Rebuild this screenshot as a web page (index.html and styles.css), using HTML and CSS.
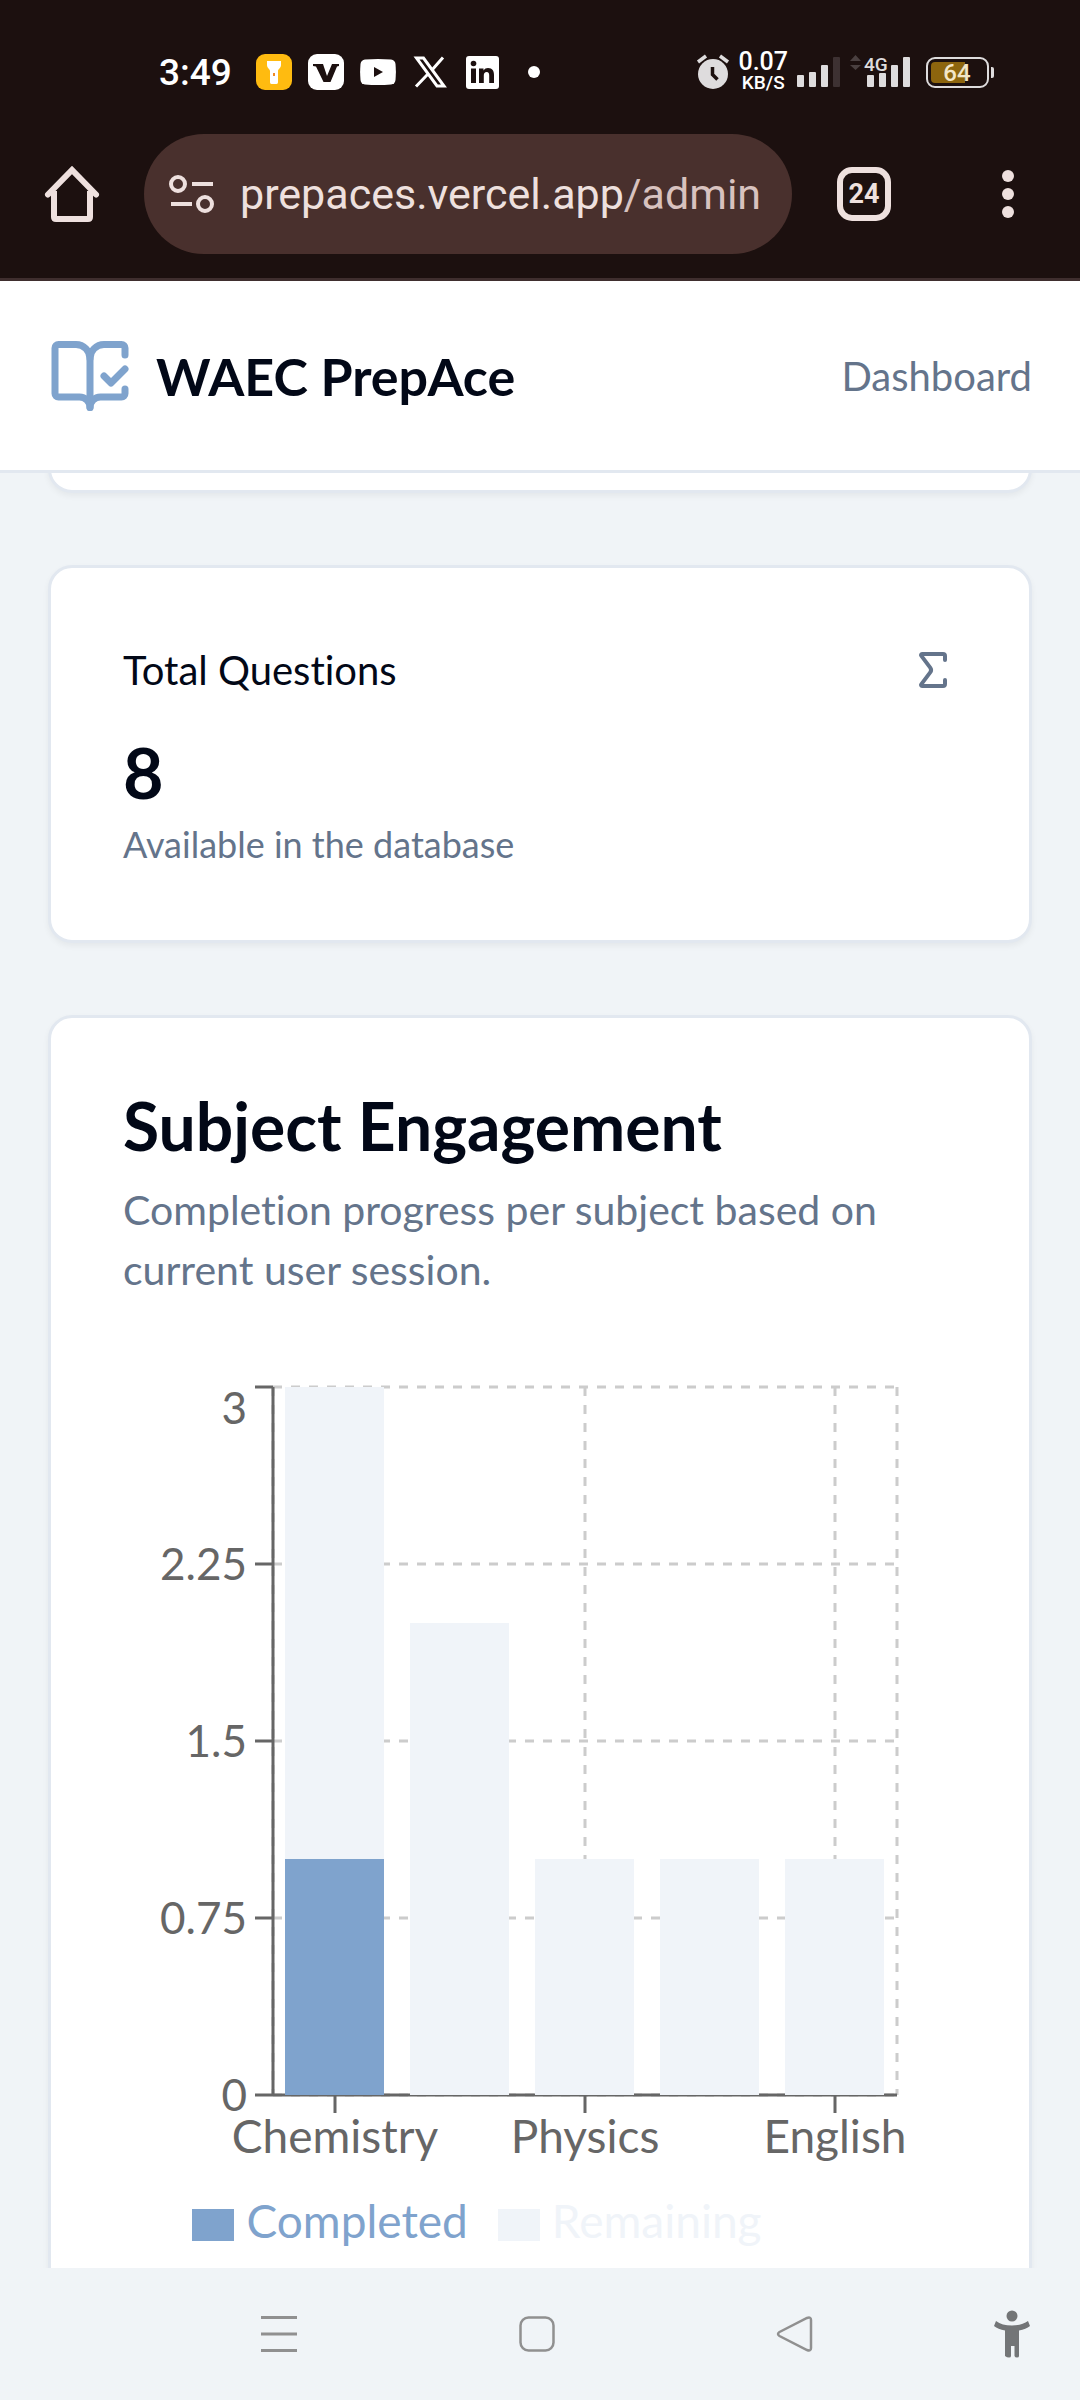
FILE: index.html
```html
<!DOCTYPE html>
<html lang="en">
<head>
  <meta charset="UTF-8">
  <meta name="viewport" content="width=device-width, initial-scale=1.0">
  <title>WAEC PrepAce - Admin</title>
  <link rel="stylesheet" href="styles.css">
</head>
<body>

  <!-- Phone status bar -->
  <div class="status-bar">
    <div class="status-left">
      <span class="clock">3:49</span>
      <svg class="app-icon" viewBox="0 0 36 36">
        <rect width="36" height="36" rx="9" fill="#ffbb10"/>
        <path d="M11 7h14v4c0 3-3 4-3 6v11c0 1-.5 2-1.500 2h-5c-1 0-1.500-1-1.500-2V17c0-2-3-3-3-6z" fill="#fff"/>
        <rect x="17" y="19" width="2" height="3" fill="#f08a24"/>
      </svg>
      <svg class="app-icon" viewBox="0 0 36 36">
        <rect width="36" height="36" rx="9" fill="#fff"/>
        <path d="M5 10h10l4 12 5-12h7v2l-2 .5L22.500 28h-7L8 12.500 5 12z" fill="#1c100f"/>
      </svg>
      <svg class="app-icon" viewBox="0 0 36 36">
        <path d="M5 5.500Q18 4.500 31 5.500Q35 6 35.500 10Q36.400 18 35.500 26Q35 30 31 30.500Q18 31.500 5 30.500Q1 30 .5 26Q-.4 18 .5 10Q1 6 5 5.500z" fill="#fff"/>
        <path d="M14 13v10l9-5z" fill="#1c100f"/>
      </svg>
      <svg class="app-icon" viewBox="0 0 36 36">
        <path d="M4.500 4h7L32 32h-7z" fill="none" stroke="#fff" stroke-width="3"/>
        <path d="M31 3.500 20 16M15.500 20.500 4 32.500" stroke="#fff" stroke-width="3"/>
      </svg>
      <svg class="app-icon" viewBox="0 0 36 36">
        <rect x="2" y="2" width="33" height="33" rx="3" fill="#fff"/>
        <circle cx="9.500" cy="9.500" r="2.800" fill="#1c100f"/>
        <path d="M7 14.500h5V29H7zM15 14.500h4.500v2c1-1.700 2.700-2.500 4.500-2.500 4.500 0 6 3 6 7v8h-4.800v-7.500c0-2-.6-3.500-2.500-3.500-2 0-2.900 1.500-2.900 3.500V29H15z" fill="#1c100f"/>
      </svg>
      <svg class="app-icon" viewBox="0 0 36 36"><circle cx="18" cy="18" r="6" fill="#fff"/></svg>
    </div>
    <div class="status-right">
      <svg width="32" height="36" viewBox="0 0 32 36" fill="none">
        <circle cx="16" cy="20" r="15" fill="#dedcdd"/>
        <path d="M1 8l8-6M31 8l-8-6" stroke="#dedcdd" stroke-width="3.500"/>
        <path d="M15.500 13v7.500l5 5" stroke="#1c100f" stroke-width="3.500"/>
      </svg>
      <div class="net-speed"><span>0.07</span><small>KB/S</small></div>
      <svg width="44" height="36" viewBox="0 0 44 36" fill="#dedcdd">
        <rect x="0" y="21" width="7" height="12" rx="1"/>
        <rect x="12" y="18" width="7" height="15" rx="1"/>
        <rect x="24" y="11" width="7" height="22" rx="1"/>
        <rect x="36" y="3" width="7" height="30" rx="1" fill="#3d3132"/>
      </svg>
      <svg class="signal-4g" width="61" height="36" viewBox="0 0 61 36" fill="#dedcdd">
        <path d="M0 7l5.500-6L11 7zM0 11h11l-5.500 5z" fill="#4a4040"/>
        <text x="14" y="17">4G</text>
        <rect x="17" y="21" width="7" height="12" rx="1"/>
        <rect x="29" y="19" width="7" height="14" rx="1"/>
        <rect x="41" y="11" width="7" height="22" rx="1"/>
        <rect x="53" y="3" width="7" height="30" rx="1"/>
      </svg>
      <svg class="battery" width="68" height="36" viewBox="0 0 68 36">
        <rect x="1" y="4" width="61" height="29" rx="8" fill="none" stroke="#dedcdd" stroke-width="2"/>
        <path d="M65 13h1q2 0 2 2v7q0 2-2 2h-1z" fill="#dedcdd"/>
        <path d="M39 8v21H9q-4 0-4-4V12q0-4 4-4z" fill="#8d650e"/>
        <text x="31" y="27">64</text>
      </svg>
    </div>
  </div>

  <!-- Browser toolbar -->
  <div class="toolbar">
    <button class="tool-btn" aria-label="Home">
      <svg width="72" height="72" viewBox="0 0 72 72" fill="none" stroke="#eee0de" stroke-width="6">
        <path d="M12 36.500 36 12l24 24.500" stroke-linecap="round"/>
        <path d="M18 33v26q0 2 2 2h32q2 0 2-2V33"/>
      </svg>
    </button>
    <button class="address" aria-label="Address">
      <svg width="48" height="48" viewBox="0 0 48 48" fill="none" stroke="#eee0de" stroke-width="4">
        <circle cx="10" cy="14" r="7"/>
        <path d="M24 14h21M3 34h21"/>
        <circle cx="37" cy="34" r="7"/>
      </svg>
      <span>prepaces.vercel.app<span class="path">/admin</span></span>
    </button>
    <button class="tab-count" aria-label="Tabs">24</button>
    <button class="menu-btn" aria-label="More">
      <svg width="12" height="48" viewBox="0 0 12 48" fill="#eee0de">
        <circle cx="6" cy="6" r="6"/><circle cx="6" cy="24" r="6"/><circle cx="6" cy="42" r="6"/>
      </svg>
    </button>
  </div>

  <header class="site-header">
    <div class="brand">
      <svg class="brand-icon" viewBox="0 0 24 24">
        <path d="M12 21V7"/>
        <path d="m16 12 2 2 4-4"/>
        <path d="M22 6V4a1 1 0 0 0-1-1h-5a4 4 0 0 0-4 4 4 4 0 0 0-4-4H3a1 1 0 0 0-1 1v13a1 1 0 0 0 1 1h6a3 3 0 0 1 3 3 3 3 0 0 1 3-3h6a1 1 0 0 0 1-1v-1.300"/>
      </svg>
      <span>WAEC PrepAce</span>
    </div>
    <a class="nav-link" href="#">Dashboard</a>
  </header>

  <main class="content">
    <div class="card card-scrolled"></div>

    <section class="card">
      <div class="stat-head">
        <span>Total Questions</span>
        <svg class="stat-icon" viewBox="0 0 24 24">
          <path d="M18 7V5a1 1 0 0 0-1-1H6.500a.5.5 0 0 0-.4.8l4.500 6a2 2 0 0 1 0 2.400l-4.500 6a.5.5 0 0 0 .4.8H17a1 1 0 0 0 1-1v-2"/>
        </svg>
      </div>
      <div class="stat-value">8</div>
      <p class="stat-note">Available in the database</p>
    </section>

    <section class="card">
      <h2>Subject Engagement</h2>
      <p class="description">Completion progress per subject based on current user session.</p>

      <svg class="chart" viewBox="0 0 834 813">
        <g class="grid">
          <path d="M150 15H774M150 192H774M150 369H774M150 546H774M150 723H774"/>
          <path d="M150 15V723M212 15V723M462 15V723M712 15V723M774 15V723"/>
        </g>
        <g class="axis">
          <path d="M150 15V723M132 15h18M132 192h18M132 369h18M132 546h18M132 723h18"/>
          <path d="M150 723H774M212 723v18M462 723v18M712 723v18"/>
        </g>
        <g class="remaining">
          <rect x="162" y="15" width="99" height="472"/>
          <rect x="287" y="251" width="99" height="472"/>
          <rect x="412" y="487" width="99" height="236"/>
          <rect x="537" y="487" width="99" height="236"/>
          <rect x="662" y="487" width="99" height="236"/>
        </g>
        <rect class="completed" x="162" y="487" width="99" height="236"/>
        <g class="labels-y">
          <text x="124" y="52">3</text>
          <text x="124" y="208">2.25</text>
          <text x="124" y="385">1.5</text>
          <text x="124" y="562">0.75</text>
          <text x="124" y="739">0</text>
        </g>
        <g class="labels-x">
          <text x="212" y="781">Chemistry</text>
          <text x="462" y="781">Physics</text>
          <text x="712" y="781">English</text>
        </g>
      </svg>
      <ul class="legend">
        <li class="legend-completed">Completed</li>
        <li class="legend-remaining">Remaining</li>
      </ul>
    </section>
  </main>

  <!-- System navigation -->
  <nav class="system-nav">
    <button aria-label="Recent apps">
      <svg width="36" height="36" viewBox="0 0 36 36" stroke="#909090" stroke-width="3"><path d="M0 1.500h36M0 18h36M0 34.500h36"/></svg>
    </button>
    <button aria-label="Home screen">
      <svg width="36" height="36" viewBox="0 0 36 36" fill="none" stroke="#909090" stroke-width="2.500"><rect x="1.500" y="1.500" width="33" height="33" rx="8"/></svg>
    </button>
    <button aria-label="Back">
      <svg width="36" height="36" viewBox="0 0 36 36" fill="none" stroke="#909090" stroke-width="2.500"><path d="M2.500 16 30 2q4-1.500 4 2v28q0 3.500-4 2L2.500 20q-3-2 0-4z"/></svg>
    </button>
    <button aria-label="Accessibility">
      <svg width="36" height="48" viewBox="0 0 36 48" fill="#737577">
        <circle cx="18" cy="6" r="5.500"/>
        <path d="M2 11q6 4.500 16 4.500T34 11l2 5q-4 3-11 4.500V46q0 1.500-2 1.500T20.500 46V36h-3.500v10q0 1.500-2 1.500T11 46V20.500Q4 19 0 16z"/>
      </svg>
    </button>
  </nav>

</body>
</html>
```

FILE: styles.css
```css
* {
  box-sizing: border-box;
}

body {
  display: flex;
  flex-direction: column;
  height: 100vh;
  margin: 0;
  overflow: hidden;
  background-color: #f0f4f7;
  color: #020817;
  font-family: Lato, "Noto Sans", sans-serif;
  font-variant-ligatures: none;
}

svg {
  display: block;
  flex-shrink: 0;
  overflow: visible;
}

button {
  padding: 0;
  border: none;
  background: none;
  font: inherit;
  cursor: pointer;
}

h2,
p,
ul {
  margin: 0;
  padding: 0;
}

/* Status bar */
.status-bar {
  display: flex;
  flex-shrink: 0;
  align-items: center;
  justify-content: space-between;
  height: 134px;
  padding: 10px 86px 0 159px;
  background-color: #1c100f;
  color: #fff;
  font-family: Roboto, sans-serif;
}

.status-left {
  display: flex;
  align-items: center;
  gap: 16px;
}

.clock {
  margin-right: 8px;
  font-size: 37px;
  font-weight: 500;
}

.app-icon {
  width: 36px;
  height: 36px;
}

.status-right {
  display: flex;
  align-items: center;
  gap: 9px;
}

.net-speed {
  display: flex;
  flex-direction: column;
  align-items: center;
  font-weight: 500;
}

.net-speed span {
  font-size: 25px;
  line-height: 22px;
}

.net-speed small {
  font-size: 19px;
  line-height: 20px;
}

.signal-4g text {
  font-size: 19px;
  font-weight: 500;
}

.battery {
  margin-left: 6px;
}

.battery text {
  fill: #f3e6c8;
  font-size: 24px;
  font-weight: 500;
  text-anchor: middle;
}

/* Browser toolbar */
.toolbar {
  display: flex;
  flex-shrink: 0;
  align-items: center;
  height: 147px;
  padding: 0 66px 24px 36px;
  border-bottom: 3px solid #3f2e2e;
  background-color: #1c100f;
  font-family: Roboto, sans-serif;
}

.address {
  display: flex;
  flex: 1;
  align-items: center;
  gap: 24px;
  height: 120px;
  margin: 0 45px 0 36px;
  padding-left: 24px;
  border-radius: 60px;
  background-color: #49302d;
  color: #eee0de;
  font-size: 43px;
  white-space: nowrap;
}

.path {
  color: #d8c2bf;
}

.tab-count {
  width: 54px;
  height: 54px;
  margin-right: 111px;
  border: 6px solid #eee0de;
  border-radius: 15px;
  color: #eee0de;
  font-size: 27px;
  font-weight: 700;
}

/* Site header */
.site-header {
  display: flex;
  flex-shrink: 0;
  align-items: center;
  justify-content: space-between;
  height: 192px;
  padding: 0 48px;
  border-bottom: 3px solid #e2e8f0;
  background-color: #fff;
}

.brand {
  display: flex;
  align-items: center;
  gap: 24px;
  font-size: 52px;
  font-weight: 700;
}

.brand-icon,
.stat-icon {
  fill: none;
  stroke: #7fa3cd;
  stroke-width: 2;
  stroke-linecap: round;
  stroke-linejoin: round;
}

.brand-icon {
  width: 84px;
  height: 84px;
}

.nav-link {
  color: #64748b;
  font-size: 40px;
  text-decoration: none;
}

/* Cards */
.content {
  display: flex;
  flex: 1;
  flex-direction: column;
  gap: 72px;
  min-height: 0;
  padding: 0 48px;
  overflow: hidden;
}

.card {
  flex-shrink: 0;
  padding: 72px;
  border: 3px solid #e2e8f0;
  border-radius: 24px;
  background-color: #fff;
  box-shadow: 0 3px 6px rgba(0, 0, 0, 0.05);
}

/* Only the bottom edge shows under the header */
.card-scrolled {
  height: 150px;
  margin-top: -130px;
}

.stat-head {
  display: flex;
  align-items: center;
  justify-content: space-between;
  padding-bottom: 24px;
  font-size: 40px;
  line-height: 60px;
}

.stat-icon {
  width: 48px;
  height: 48px;
  stroke: #64748b;
}

.stat-value {
  font-size: 70px;
  font-weight: 700;
  line-height: 96px;
}

.stat-note {
  color: #64748b;
  font-size: 36px;
  line-height: 48px;
}

h2 {
  margin-bottom: 18px;
  font-size: 66px;
  font-weight: 700;
  line-height: 72px;
}

.description {
  margin-bottom: 72px;
  color: #64748b;
  font-size: 41px;
  line-height: 60px;
}

/* Chart */
.chart {
  width: 100%;
  font-size: 46px;
}

.grid {
  fill: none;
  stroke: #ccc;
  stroke-width: 3;
  stroke-dasharray: 9 9;
}

.axis {
  fill: none;
  stroke: #666;
  stroke-width: 3;
}

.remaining {
  fill: #f0f4f9;
}

.completed {
  fill: #7fa3cd;
}

.labels-y {
  fill: #666;
  font-size: 44px;
  text-anchor: end;
}

.labels-x {
  fill: #666;
  text-anchor: middle;
}

.legend {
  display: flex;
  justify-content: center;
  padding-right: 96px;
  font-size: 46px;
  line-height: 72px;
  list-style: none;
}

.legend li {
  display: flex;
  align-items: center;
  gap: 12px;
  margin-right: 30px;
}

.legend li::before {
  width: 42px;
  height: 32px;
  margin-top: 8px;
  background-color: currentColor;
  content: "";
}

.legend-completed {
  color: #7fa3cd;
}

.legend-remaining {
  color: #f0f4f9;
}

/* System navigation */
.system-nav {
  display: grid;
  flex-shrink: 0;
  grid-template-columns: repeat(3, 1fr) 156px;
  height: 132px;
  padding-left: 150px;
  background-color: #f0f4f7;
}

.system-nav button {
  display: flex;
  align-items: center;
  justify-content: center;
}

.system-nav button:last-child {
  justify-content: flex-end;
  padding-right: 50px;
}
```
